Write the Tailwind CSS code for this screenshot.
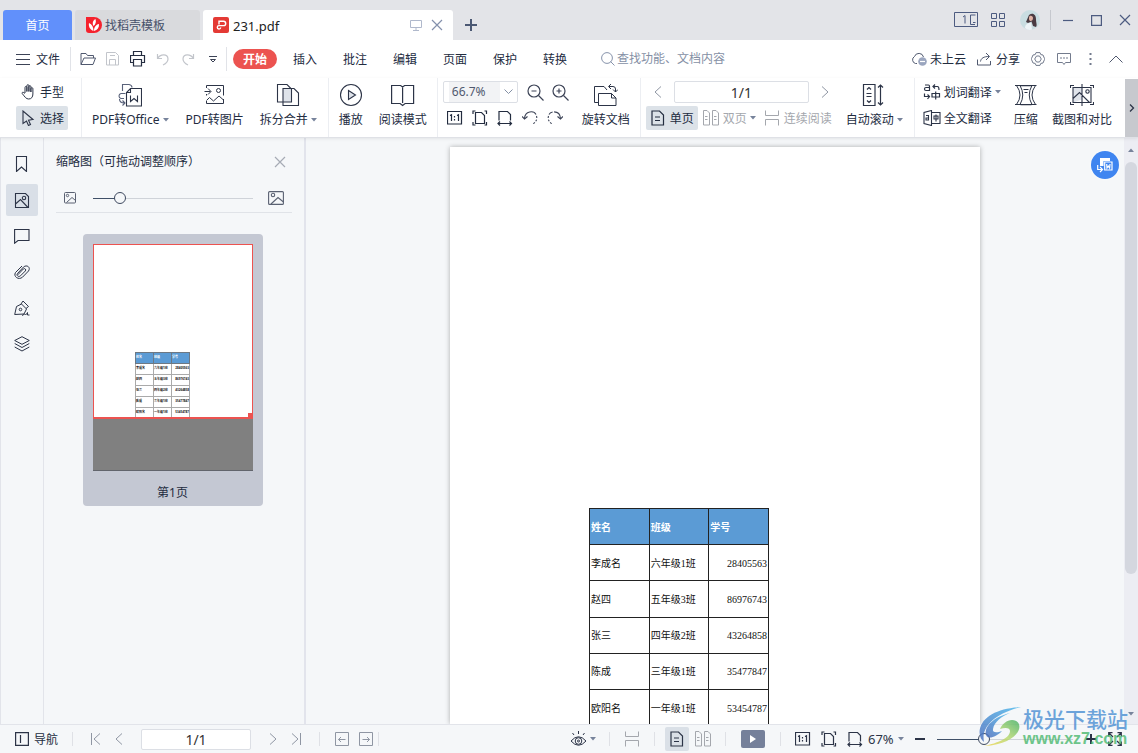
<!DOCTYPE html>
<html lang="zh-CN">
<head>
<meta charset="utf-8">
<title>231.pdf</title>
<script src="https://cdn.jsdelivr.net/npm/@tailwindcss/browser@4"></script>
</head>
<body class="h-screen flex flex-col overflow-hidden bg-white text-[12px] leading-4 text-[#232c3f] font-['Noto_Sans','Noto_Sans_CJK_SC',sans-serif] whitespace-nowrap">
<svg class="hidden">
  <symbol id="tri" viewBox="0 0 6 4"><path d="M0 0h6L3 3.500z" fill="#77839b"/></symbol>
  <symbol id="left" viewBox="0 0 8 12"><path d="M7 .5L1 6l6 5.500" fill="none" stroke="currentColor"/></symbol>
  <symbol id="right" viewBox="0 0 8 12"><path d="M1 .5L7 6l-6 5.500" fill="none" stroke="currentColor"/></symbol>
  <symbol id="one" viewBox="0 0 16 14"><g fill="none" stroke="currentColor"><path d="M.5.500h14v12.500h-14z" stroke-width="1.200"/><path d="M3 4.500l1.500-.7V10M10 4.500l1.500-.7V10M7.500 5v1.500M7.500 8v1.500" stroke-width="1.200"/></g></symbol>
  <symbol id="fitpage" viewBox="0 0 16 16"><g fill="none" stroke="currentColor" stroke-width="1.200"><path d="M3.500 2.500h6l3 3v8h-9zM1 4V1h2.500M12.500 1h2v3M14.500 12v3h-2M3.500 15H1v-3"/></g></symbol>
  <symbol id="fitwidth" viewBox="0 0 16 16"><g fill="none" stroke="currentColor" stroke-width="1.200"><path d="M2 10.500V1.500h8.500l3 3v6M1 13.500h13.500M3 11.500l-2 2 2 2M12.500 11.500l2 2-2 2"/></g></symbol>
  <symbol id="single" viewBox="0 0 14 16"><path d="M1 1h7.500l4 4v10H1zM4 7h5M4 10.500h5" fill="none" stroke="currentColor" stroke-width="1.200"/></symbol>
  <symbol id="double" viewBox="0 0 18 16"><path d="M1.500.5h3.500l2.500 2.500v12h-6zM10.500.5h3.500l2.500 2.500v12h-6zM3 6.500h2.500M3 9.500h2.500M12 6.500h2.500M12 9.500h2.500" fill="none" stroke="currentColor"/></symbol>
  <symbol id="cont" viewBox="0 0 16 16"><path d="M1.500.5v5h13v-5M1.500 15.500v-6h13v6" fill="none" stroke="currentColor"/></symbol>
  <symbol id="pic" viewBox="0 0 16 14"><g fill="none" stroke="currentColor" stroke-width="1.100"><rect x=".6" y=".6" width="14.800" height="12.800" rx="1"/><circle cx="5" cy="4" r="1.700"/><path d="M3 13l7-6.500 5.500 4.500"/></g></symbol>
  <symbol id="close" viewBox="0 0 12 12"><path d="M1 1l10 10M11 1L1 11" fill="none" stroke="currentColor" stroke-width="1.200"/></symbol>
</svg>

<!-- Title bar with document tabs -->
<header class="flex h-10 shrink-0 bg-[#e3e4e8] pl-[3px]">
  <nav class="flex items-end gap-[3px]">
    <button class="h-[30px] w-[69px] rounded-t-[3px] bg-[#6190fb] pt-[2px] text-white">首页</button>
    <button class="flex h-[30px] w-[125px] items-center gap-[3px] rounded-t-[3px] bg-[#d9dadd] pl-[11px] text-[#47516a]">
      <svg class="size-4" viewBox="0 0 16 16"><path d="M0 0h8a8 8 0 1 1 0 16H3a3 3 0 0 1-3-3z" fill="#f5222d"/><path d="M7.500 14C3 12 2.500 8.500 3 6c3 1.500 4.500 4 4.500 8zM7.500 9C6 6 7 3.500 9.500 2c1 3 0 5.500-2 7zM8 14c0-4 2-6.500 5-7 .3 3.500-1.500 6-5 7z" fill="#fff"/></svg>
      <span class="pt-[2px]">找稻壳模板</span>
    </button>
    <div class="flex h-[30px] w-[250px] items-center rounded-t-[3px] bg-white pl-[10px] pr-[10px] text-[#222]">
      <svg class="mr-1 size-4" viewBox="0 0 16 16"><rect width="16" height="16" rx="2" fill="#e43a35"/><path d="M6 7.500V4.200h4.500a2 2 0 0 1 0 4.400H6a1.700 1.700 0 1 0 1.700 1.900" fill="none" stroke="#fff" stroke-width="1.400"/></svg>
      <span class="pt-px text-[13px]">231.pdf</span>
      <button class="ml-auto mr-[9px]" aria-label="窗口"><svg class="h-3 w-3" viewBox="0 0 12 12"><path d="M.5 1.500h11v7H.5zM6 8.500v3M3 11.500h6" fill="none" stroke="#b0b9cc"/></svg></button>
      <button aria-label="关闭标签"><svg class="size-3 text-[#8491ad]"><use href="#close"/></svg></button>
    </div>
  </nav>
  <button class="ml-3 mt-[10px]" aria-label="新建"><svg class="size-3" viewBox="0 0 12 12"><path d="M6 0v12M0 6h12" stroke="#4b5873" stroke-width="2"/></svg></button>
  <div class="ml-auto flex items-center pr-[7px] text-[#4d5b80]">
    <button aria-label="窗口列表"><svg class="h-4 w-6" viewBox="0 0 24 16"><g fill="none" stroke="currentColor"><path d="M.5.500h23v14H.5zM16.500 3v9.500h4.500M16.500 3h5M19 10.500h2.500M9 5l2-1.500V11.500"/></g></svg></button>
    <button class="ml-[13px]" aria-label="应用"><svg class="size-[14px]" viewBox="0 0 14 14"><path d="M.5.500h5v5h-5zM8.500.500h5v5h-5zM.5 8.500h5v5h-5zM8.500 8.500h5v5h-5z" fill="none" stroke="currentColor"/></svg></button>
    <button class="ml-[15px]" aria-label="账号"><svg class="size-5" viewBox="0 0 20 20"><circle cx="10" cy="10" r="10" fill="#c9dde1"/><path d="M9 5c4-3 7 0 7 4s1.500 6 0 8l-3-1-1.500-4.500L8 13l-2-1z" fill="#4a3b42"/><path d="M9.500 6c2-.8 3.500.2 3.500 2s-1 3-2.500 3-2-2.500-1-5z" fill="#e0b3a5"/><path d="M5 18c0-3 2-5 6-5l1 6.500C10 20.500 7 20 5 18z" fill="#eef4f7"/></svg></button>
    <span class="ml-[10px] h-5 w-px bg-[#c6c8ce]"></span>
    <button class="ml-3" aria-label="最小化"><svg class="size-[11px]" viewBox="0 0 11 11"><path d="M0 5.500h10" stroke="currentColor" stroke-width="1.200"/></svg></button>
    <button class="ml-[17px]" aria-label="最大化"><svg class="size-[11px]" viewBox="0 0 11 11"><path d="M.6.600h9.800v9.800H.6z" fill="none" stroke="currentColor" stroke-width="1.200"/></svg></button>
    <button class="ml-[17px]" aria-label="关闭"><svg class="size-3"><use href="#close"/></svg></button>
  </div>
</header>

<!-- Menu row -->
<nav class="flex h-[38px] shrink-0 items-center pl-4 pr-[15px]">
  <button class="flex items-center gap-[6px]"><svg class="h-3 w-[14px]" viewBox="0 0 14 12"><path d="M0 1.500h14M0 6.500h14M0 11.500h14" stroke="#3c4356"/></svg><span class="pt-px">文件</span></button>
  <span class="ml-[10px] mr-[9px] h-6 w-px bg-[#e1e3e8]"></span>
  <button aria-label="打开"><svg class="h-[14px] w-4" viewBox="0 0 16 14"><path d="M1 12.500V1.500h5l1.500 2h6v2.500M1 12.500h12l2.500-6.500H4z" fill="none" stroke="#50596f"/></svg></button>
  <button class="ml-[10px]" aria-label="保存"><svg class="size-[14px]" viewBox="0 0 14 14"><path d="M.5.500h9l3 3v9.500H.5zM3.500 13V7.500h6V13M4 3.500h5" fill="none" stroke="#c2c5cb"/></svg></button>
  <button class="ml-[10px]" aria-label="打印"><svg class="size-4" viewBox="0 0 16 16"><path d="M3.500 4.500V.500h8v4M3.500 11.500H.5v-7h14v7h-3M3.500 8.500h8v6.500h-8z" fill="none" stroke="#252d40" stroke-width="1.200"/></svg></button>
  <button class="ml-[10px]" aria-label="撤销"><svg class="size-[14px]" viewBox="0 0 14 14"><path d="M1.500 2v4.500H6M1.500 6.500C4 2 12 1 12 7c0 3-2 4.500-5 6" fill="none" stroke="#c2c5cb" stroke-width="1.200"/></svg></button>
  <button class="ml-[11px]" aria-label="重做"><svg class="size-[14px]" viewBox="0 0 14 14"><path d="M12.500 2v4.500H8M12.500 6.500C10 2 2 1 2 7c0 3 2 4.500 5 6" fill="none" stroke="#c2c5cb" stroke-width="1.200"/></svg></button>
  <button class="ml-[14px]" aria-label="更多"><svg class="h-2 w-2" viewBox="0 0 8 8"><path d="M0 1.500h8M1.500 4.500h5L4 7z" fill="none" stroke="#3c4356"/></svg></button>
  <span class="ml-[9px] mr-[6px] h-6 w-px bg-[#e1e3e8]"></span>
  <button class="h-5 w-11 rounded-full bg-[#ec5350] pt-px font-bold text-white">开始</button>
  <div class="ml-4 flex gap-[26px] pt-[2px]">
    <button>插入</button><button>批注</button><button>编辑</button><button>页面</button><button>保护</button><button>转换</button>
  </div>
  <label class="ml-[34px] flex items-center gap-[2px]">
    <svg class="size-[14px]" viewBox="0 0 14 14"><path d="M9.500 9.500L13.500 13.500" stroke="#8793ab"/><circle cx="6" cy="6" r="5.400" fill="none" stroke="#8793ab"/></svg>
    <input class="w-32 bg-transparent outline-none placeholder:text-[#8590a5]" placeholder="查找功能、文档内容" aria-label="查找">
  </label>
  <div class="ml-auto flex items-center">
    <button class="flex items-center gap-[3px]"><svg class="h-[14px] w-4" viewBox="0 0 16 14"><path d="M6 11.500H4.500A3.800 3.800 0 0 1 3.500 4.500 4.700 4.700 0 0 1 12.500 5" fill="none" stroke="#50596f"/><circle cx="11.500" cy="9.500" r="4.300" fill="#9ba6bf"/><path d="M9 9.500h5" stroke="#fff" stroke-width="1.200"/></svg><span class="pt-[2px]">未上云</span></button>
    <button class="ml-[11px] flex items-center gap-[5px]"><svg class="size-[14px]" viewBox="0 0 14 14"><path d="M.5 7.500v5.500h13V9M3.500 9.500C4 6 7 4.500 12 4.500M9 1l3.500 3.500L9 8" fill="none" stroke="#50596f"/></svg><span class="pt-[2px]">分享</span></button>
    <button class="ml-[11px]" aria-label="设置"><svg class="size-[14px]" viewBox="0 0 14 14"><g fill="none" stroke="#737b8d"><path d="M5 .6h4l.8 2 2.200.4 1.500 3.500v1L12 11l-2.200.4-.8 2H5l-.8-2L2 11 .5 7.500v-1L2 3l2.200-.4z"/><path d="M5.500 4h3L10.300 7 8.500 10h-3L3.700 7z"/></g></svg></button>
    <button class="ml-3" aria-label="反馈"><svg class="size-[14px]" viewBox="0 0 14 14"><path d="M.5 1.500h13v9h-5L7 12.500l-1.500-2h-5z" fill="none" stroke="#737b8d"/><path d="M3 6h2M6 6h2M9 6h2" stroke="#737b8d"/></svg></button>
    <button class="ml-[18px]" aria-label="更多选项"><svg class="h-[14px] w-[3px]" viewBox="0 0 3 14"><path d="M.5 1h2v2h-2zM.5 6h2v2h-2zM.5 11h2v2h-2z" fill="#737b8d"/></svg></button>
    <button class="ml-[17px]" aria-label="收起"><svg class="h-2 w-[14px]" viewBox="0 0 14 8"><path d="M.5 7.500L7 1l6.500 6.500" fill="none" stroke="#50596f"/></svg></button>
  </div>
</nav>

<!-- Ribbon -->
<section class="relative z-10 flex h-[60px] shrink-0 border-b border-[#dfe1e6] bg-white pl-4 shadow-[0_1px_3px_rgba(0,0,0,0.08)]">
  <div class="flex w-[52px] flex-col pt-[2px]">
    <button class="flex h-6 items-center gap-[5px] pl-[5px]"><svg class="h-4 w-[14px]" viewBox="0 0 14 16"><path d="M4 9V3.500q0-1 .9-1t1 1V7.500V1.700q0-1 1-1t1 1V7.500V2.700q0-1 1-1t1 1V8V4.700q0-1 1-1t1 1v5.300c0 3-1.500 5-4.200 5C5 15 4 13 1.200 9.500 .7 8.300 2 7.500 4 9.500" fill="none" stroke="#2c3447"/></svg><span class="pt-[2px]">手型</span></button>
    <button class="mt-[2px] flex h-6 items-center gap-[5px] rounded-[2px] bg-[#dce2e8] pl-[5px]"><svg class="h-4 w-[14px]" viewBox="0 0 14 16"><path d="M2 1v12.500l3.500-2.500 2 4.500 2-1-2-4.300 4.500-.7z" fill="none" stroke="#2c3447" stroke-width="1.100"/></svg><span class="pt-px">选择</span></button>
  </div>
  <span class="ml-[13px] w-px bg-[#eceef2]"></span>
  <button class="ml-[10px] flex flex-col items-center justify-start pt-[5px]">
    <svg class="size-6" viewBox="0 0 24 24"><g fill="none" stroke="#2c3447" stroke-width="1.100"><path d="M12.500 5.500h11v17.500h-15V9.500zM12.500 5.500v4h-4"/><path d="M12.500 12.500v6l3.500-3 3.500 3v-6"/><path d="M4.500 8V1.500h6.500q3 .5 3 3M7.500 10.500H3q-2 .5-2 2.500t2 2.500h3M1.500 16Q1.500 20 6.500 20M4.500 17.500l2.500 2.500-2.500 2.500" stroke="#59627a"/></g></svg>
    <span class="mt-[5px] flex items-center gap-[3px]">PDF转Office<svg class="h-1 w-[6px]"><use href="#tri"/></svg></span>
  </button>
  <button class="ml-[17px] flex flex-col items-center justify-start pt-[5px]">
    <svg class="size-6" viewBox="0 0 24 24"><g fill="none" stroke="#2c3447"><path d="M3.500 5V2.500h17v10M3.500 11v1.500M3.500 18v2.500h17V16M1.500 8.500h6M5 5.500l3 3-3 3M3.500 17.500l3-3 4 3.500 5.500-5 4.500 4"/><circle cx="15.500" cy="7.500" r="2"/></g></svg>
    <span class="mt-[5px]">PDF转图片</span>
  </button>
  <button class="ml-4 flex flex-col items-center justify-start pt-[5px]">
    <svg class="size-6" viewBox="0 0 24 24"><path d="M7 6h8v13H7z" fill="#dfe3ea"/><path d="M1.500 1.500h9.500l4.500 4.500v13h-14zM7 5.500h11l4.500 4.500v12.500H7z" fill="none" stroke="#2c3447" stroke-width="1.100"/></svg>
    <span class="mt-[5px] flex items-center gap-[3px]">拆分合并<svg class="h-1 w-[6px]"><use href="#tri"/></svg></span>
  </button>
  <span class="ml-[11px] w-px bg-[#eceef2]"></span>
  <button class="ml-[10px] flex flex-col items-center justify-start pt-[5px]">
    <svg class="size-6" viewBox="0 0 24 24"><circle cx="12" cy="12" r="10.500" fill="none" stroke="#2c3447" stroke-width="1.100"/><path d="M9.500 7.500l7 4.500-7 4.500z" fill="#dfe3ea" stroke="#2c3447" stroke-width="1.100"/></svg>
    <span class="mt-[5px]">播放</span>
  </button>
  <button class="ml-4 flex flex-col items-center justify-start pt-[5px]">
    <svg class="size-6" viewBox="0 0 24 24"><path d="M.6 2.500h9l2 1.500 2-1.500h9v18h-8.500l-2.500 2-2.500-2H.6zM11.600 4v16" fill="none" stroke="#2c3447" stroke-width="1.200"/></svg>
    <span class="mt-[5px]">阅读模式</span>
  </button>
  <span class="ml-[10px] w-px bg-[#eceef2]"></span>
  <div class="ml-[5px] flex w-[127px] flex-col pt-[3px]">
    <div class="flex items-center">
      <label class="flex h-[22px] w-[75px] items-center justify-between rounded-[2px] border border-[#dcdfe5] pl-[5px] pr-1">
        <select class="h-5 w-[51px] appearance-none bg-[#f2f3f5] pl-[3px] text-[12px] leading-5 text-[#50596f] outline-none" aria-label="缩放比例"><option>66.7%</option></select>
        <svg class="h-[6px] w-[9px]" viewBox="0 0 9 6"><path d="M.5.500l4 4 4-4" fill="none" stroke="#8490a5"/></svg>
      </label>
      <button class="ml-[9px]" aria-label="缩小"><svg class="size-[17px]" viewBox="0 0 17 17"><g fill="none" stroke="#3c4356" stroke-width="1.200"><circle cx="7" cy="7" r="6"/><path d="M11.500 11.500l5 5M4.500 7h5"/></g></svg></button>
      <button class="ml-2" aria-label="放大"><svg class="size-[17px]" viewBox="0 0 17 17"><g fill="none" stroke="#3c4356" stroke-width="1.200"><circle cx="7" cy="7" r="6"/><path d="M11.500 11.500l5 5M4.500 7h5M7 4.500v5"/></g></svg></button>
    </div>
    <div class="mt-[7px] flex items-center gap-[9px] pl-1">
      <button aria-label="实际大小"><svg class="h-[14px] w-4"><use href="#one"/></svg></button>
      <button aria-label="适合页面"><svg class="size-4"><use href="#fitpage"/></svg></button>
      <button aria-label="适合宽度"><svg class="size-4"><use href="#fitwidth"/></svg></button>
      <button aria-label="向左旋转"><svg class="size-4" viewBox="0 0 16 16"><g fill="none" stroke="#3c4356" stroke-width="1.100"><path d="M2.500 8.500C3 .5 12 .5 14 4.500"/><path d="M14.500 6q1.500 5-4.500 8.500" stroke-dasharray="2 1.500"/><path d="M0 6.500L2.500 9l3-2.500"/></g></svg></button>
      <button aria-label="向右旋转"><svg class="size-4" viewBox="0 0 16 16"><g fill="none" stroke="#3c4356" stroke-width="1.100"><path d="M13.500 8.500C13 .5 4 .5 2 4.500" stroke-dasharray="10 1.500"/><path d="M1.500 6q-1.500 5 4.500 8.500" stroke-dasharray="2 1.500"/><path d="M16 6.500L13.500 9l-3-2.500"/></g></svg></button>
    </div>
  </div>
  <button class="ml-3 flex flex-col items-center justify-start pt-[5px]">
    <svg class="size-6" viewBox="0 0 24 24"><g fill="none" stroke="#2c3447"><path d="M4 19.500H.5V3.500h9.500l3 3.500M4.500 10.500h13l4.500 4.500v7.500h-17.500zM17.500 10.500v4.500h4.500"/><path d="M15 3.500h4q2.500 0 2.500 2.500v3M17 1l-2.500 2.500L17 6M19 6.500l2.500 2.500L24 6.500"/></g></svg>
    <span class="mt-[5px]">旋转文档</span>
  </button>
  <span class="ml-[10px] w-px bg-[#eceef2]"></span>
  <div class="ml-[5px] flex w-[187px] flex-col pt-[3px]">
    <div class="flex items-center pl-2 pr-1 text-[#8f96a3]">
      <button aria-label="上一页"><svg class="h-3 w-2"><use href="#left"/></svg></button>
      <input class="mx-3 h-[22px] w-[135px] rounded-[2px] border border-[#dcdfe5] text-center text-[14px] leading-5 text-[#333] outline-none" value="1/1" aria-label="页码">
      <button aria-label="下一页"><svg class="h-3 w-2"><use href="#right"/></svg></button>
    </div>
    <div class="mt-[3px] flex items-center text-[#a4a7ad]">
      <button class="flex h-6 w-[52px] items-center gap-[5px] rounded-[2px] bg-[#dce2e8] pl-[5px] text-[#232c3f]"><svg class="h-4 w-[14px]"><use href="#single"/></svg><span class="pt-px">单页</span></button>
      <button class="ml-1 flex items-center gap-[3px]"><svg class="h-4 w-[18px]"><use href="#double"/></svg><span class="pt-px">双页</span><svg class="h-1 w-[6px]"><use href="#tri"/></svg></button>
      <button class="ml-2 flex items-center gap-1"><svg class="size-4"><use href="#cont"/></svg><span class="pt-px">连续阅读</span></button>
    </div>
  </div>
  <button class="ml-[13px] flex flex-col items-center justify-start pt-[5px]">
    <svg class="size-6" viewBox="0 0 24 24"><path d="M1.500 1.500h11.500v21H1.500zM4.500 10.500h5M4.500 13.500h5M5 6.500l2-2 2 2M5 17.500l2 2 2-2M18.500 2v20M16 4.500l2.500-2.500L21 4.500M16 19.500l2.500 2.500 2.500-2.500" fill="none" stroke="#2c3447" stroke-width="1.200"/></svg>
    <span class="mt-[5px] flex items-center gap-[3px]">自动滚动<svg class="h-1 w-[6px]"><use href="#tri"/></svg></span>
  </button>
  <span class="ml-[11px] w-px bg-[#eceef2]"></span>
  <div class="ml-2 flex flex-col gap-[2px] pt-[2px]">
    <button class="flex h-6 items-center gap-[3px]"><svg class="h-4 w-[18px]" viewBox="0 0 18 16"><g fill="none" stroke="#2c3447" stroke-width="1.200"><path d="M2 1h3.500q1 0 1 1.500v4.500M6.500 3.500H3q-1.500 0-1.500 1.500T3 6.500h3.500M9 9.500h7.500v3.500H9zM12.700 7.500v8M10 2.500h4.500q1.500 0 1.500 3.500M12 .5l-2 2 2 2M1.500 9.500v3h5M4.500 10.500l2 2-2 2.500"/></g></svg><span class="pt-[2px]">划词翻译</span><svg class="h-1 w-[6px]"><use href="#tri"/></svg></button>
    <button class="flex h-6 items-center gap-[3px]"><svg class="h-4 w-[18px]" viewBox="0 0 18 16"><g fill="none" stroke="#2c3447" stroke-width="1.100"><path d="M8.500.500v15L1 13.500v-11zM8.500 2.500H17v11H8.500M3 5.500h2.500v4.500H3V8h2.500M11 6h4v3h-4zM13 4.500v7"/></g></svg><span class="pt-px">全文翻译</span></button>
  </div>
  <button class="ml-[13px] flex flex-col items-center justify-start pt-[5px]">
    <svg class="size-6" viewBox="0 0 24 24"><path d="M1 2.500h21.500M1 21.500h21.500M2.500 2.500q7 9.500 0 19M6 2.500q5.500 9.500 0 19M21.500 2.500q-7 9.500 0 19M18 2.500q-5.500 9.500 0 19" fill="none" stroke="#2c3447"/><path d="M6.500 2h11v1.200h-11zM6.500 21h11v1.200h-11z" fill="#2c3447"/><path d="M9.500 6.500h5M10.500 9.500h3" fill="none" stroke="#2c3447"/></svg>
    <span class="mt-[5px]">压缩</span>
  </button>
  <button class="ml-[14px] flex flex-col items-center justify-start pt-[5px]">
    <svg class="size-6" viewBox="0 0 24 24"><path d="M3 4.500h9v12l-9 3z" fill="#dfe3ea"/><g fill="none" stroke="#2c3447" stroke-width="1.100"><path d="M12 1v22M3 4.500h18v15H3zM.5 5V2.500H4M20 2.500h3.500V5M23.500 19v2.500H20M4 21.500H.5V19M3 15.500l6.500-6 10 10"/><circle cx="17.500" cy="8.500" r="1.700"/></g></svg>
    <span class="mt-[5px]">截图和对比</span>
  </button>
  <button class="ml-auto mt-px flex w-[13px] items-center justify-center bg-[#c7c9ce]" aria-label="展开功能区"><svg class="h-2 w-[6px]" viewBox="0 0 6 8"><path d="M1 .5L4.500 4 1 7.500" fill="none" stroke="#2c3447" stroke-width="1.300"/></svg></button>
</section>

<!-- Work area -->
<main class="flex min-h-0 flex-1 bg-[#f5f7f9]">
  <nav class="flex w-11 shrink-0 flex-col items-center gap-1 border-x border-[#e2e4ea] pt-[10px] text-[#2c3447]">
    <button class="grid size-8 place-items-center" aria-label="书签"><svg class="size-4" viewBox="0 0 16 16"><path d="M2.500.500h10v15l-5-4.500-5 4.500z" fill="none" stroke="currentColor" stroke-width="1.100"/></svg></button>
    <button class="grid size-8 place-items-center rounded-[2px] bg-[#d9dfe7]" aria-label="缩略图"><svg class="size-4" viewBox="0 0 16 16"><g fill="none" stroke="currentColor" stroke-width="1.100"><path d="M1.500 1.500h10l3 3v11h-13zM1.500 12l5-4.500 7.500 8"/><circle cx="10" cy="6" r="1.700"/></g></svg></button>
    <button class="grid size-8 place-items-center" aria-label="批注"><svg class="size-4" viewBox="0 0 16 16"><path d="M.6 1.500h14.400v11H4L.6 15.200z" fill="none" stroke="currentColor" stroke-width="1.100"/></svg></button>
    <button class="grid size-8 place-items-center" aria-label="附件"><svg class="size-4" viewBox="0 0 16 16"><path d="M3.800 10.800L9.300 5a1.300 1.300 0 0 1 2 2L6.500 11.800C4.500 13.500 2 11.500 3.500 9.500L9.500 3C13 .2 17 3.500 14.500 7L8.500 13.200C4.500 16.500-1 12.500 1.500 8.500L8 2" fill="none" stroke="currentColor"/></svg></button>
    <button class="grid size-8 place-items-center" aria-label="签名"><svg class="size-4" viewBox="0 0 16 16"><g fill="none" stroke="currentColor"><path d="M.7 14.500L2.500 6.500l5-2.500 5 5-2.500 5zM7 4l2-3 5.500 5.500L12 8.500"/><circle cx="6.500" cy="9.500" r="1.300"/><path d="M8 15.500q3-2 3.500-1t2-2v2.500h2"/></g></svg></button>
    <button class="grid size-8 place-items-center" aria-label="图层"><svg class="size-4" viewBox="0 0 16 16"><path d="M8 .7l7.300 3.800L8 8.300.7 4.500zM.7 7.500L8 11.500l7.300-4M.7 11L8 15l7.300-4" fill="none" stroke="currentColor"/></svg></button>
  </nav>

  <aside class="flex w-[262px] shrink-0 flex-col border-r-2 border-[#e2e4ec] px-3">
    <div class="flex h-12 items-center justify-between pr-1">
      <h2>缩略图（可拖动调整顺序）</h2>
      <button class="mr-[2px]" aria-label="关闭面板"><svg class="size-3 text-[#a6abb5]"><use href="#close"/></svg></button>
    </div>
    <div class="flex h-[27px] items-start border-b border-[#e0e3e8] px-2 pt-1 text-[#5a6172]">
      <div class="flex h-4 flex-1 items-center">
        <svg class="h-3 w-3" viewBox="0 0 12 12"><g fill="none" stroke="currentColor"><rect x=".5" y=".5" width="11" height="10.500" rx="1"/><circle cx="3.500" cy="3.500" r="1.200"/><path d="M2.500 10.500l5.500-5 3.500 3"/></g></svg>
        <input type="range" value="14" aria-label="缩略图大小" class="ml-[17px] mr-[15px] h-3 min-w-0 flex-1 appearance-none bg-[linear-gradient(to_right,#3f5068_17%,#cfd3d9_17%)] bg-[length:100%_1px] bg-center bg-no-repeat [&::-webkit-slider-thumb]:size-3 [&::-webkit-slider-thumb]:appearance-none [&::-webkit-slider-thumb]:rounded-full [&::-webkit-slider-thumb]:border [&::-webkit-slider-thumb]:border-[#3f4a60] [&::-webkit-slider-thumb]:bg-[#f5f7f9]">
        <svg class="h-[14px] w-4"><use href="#pic"/></svg>
      </div>
    </div>
    <figure class="ml-[27px] mt-[21px] w-[180px] rounded-[4px] bg-[#c4c8d3] p-[10px] pb-[5px]">
      <div class="border-b border-[#62656c] bg-[#808080]">
        <div class="relative flex h-[175px] items-end border border-b-2 border-[#ec5350] bg-white pl-[41px]">
          <table class="w-[55px] border-collapse text-[3px] leading-[3px] font-bold text-[#111]" aria-label="缩略图预览">
            <tr class="h-[11px] bg-[#5b9bd5] text-white"><th class="w-[18px] border border-[#6d7883] p-0 text-left">姓名</th><th class="w-[18px] border border-[#6d7883] p-0 text-left">班级</th><th class="border border-[#6d7883] p-0 text-left">学号</th></tr>
            <tr class="h-[11px]"><td class="border border-[#aaa] p-0">李成名</td><td class="border border-[#aaa] p-0">六年级1班</td><td class="border border-[#aaa] p-0 text-right">28405563</td></tr>
            <tr class="h-[11px]"><td class="border border-[#aaa] p-0">赵四</td><td class="border border-[#aaa] p-0">五年级3班</td><td class="border border-[#aaa] p-0 text-right">86976743</td></tr>
            <tr class="h-[11px]"><td class="border border-[#aaa] p-0">张三</td><td class="border border-[#aaa] p-0">四年级2班</td><td class="border border-[#aaa] p-0 text-right">43264858</td></tr>
            <tr class="h-[11px]"><td class="border border-[#aaa] p-0">陈成</td><td class="border border-[#aaa] p-0">三年级1班</td><td class="border border-[#aaa] p-0 text-right">35477847</td></tr>
            <tr class="h-[10px]"><td class="border border-b-0 border-[#aaa] p-0">欧阳名</td><td class="border border-b-0 border-[#aaa] p-0">一年级1班</td><td class="border border-b-0 border-[#aaa] p-0 text-right">53454787</td></tr>
          </table>
          <span class="absolute bottom-0 right-0 size-1 bg-[#ec5350]"></span>
        </div>
        <div class="h-[51px]"></div>
      </div>
      <figcaption class="mt-[14px] pr-px text-center">第1页</figcaption>
    </figure>
  </aside>

  <section class="relative flex min-w-0 flex-1 justify-center overflow-hidden pt-[9px]">
    <article class="w-[530px] shrink-0 bg-white pl-[139px] pt-[361px] shadow-[0_0_5px_rgba(0,0,0,0.3)]">
      <table class="w-[180px] table-fixed border-collapse text-[10px] leading-3 text-[#111] font-['Liberation_Serif','Noto_Sans_CJK_SC',serif]">
        <tr class="h-9 bg-[#5b9bd5] text-white"><th class="border border-[#222] px-px pb-0 pt-[2px] text-left">姓名</th><th class="border border-[#222] px-px pb-0 pt-[2px] text-left">班级</th><th class="border border-[#222] px-px pb-0 pt-[2px] text-left">学号</th></tr>
        <tr class="h-9"><td class="border border-[#222] px-px pb-0 pt-[2px]">李成名</td><td class="border border-[#222] px-px pb-0 pt-[2px]">六年级1班</td><td class="border border-[#222] px-px pb-0 pt-[2px] text-right">28405563</td></tr>
        <tr class="h-[37px]"><td class="border border-[#222] px-px pb-0 pt-[2px]">赵四</td><td class="border border-[#222] px-px pb-0 pt-[2px]">五年级3班</td><td class="border border-[#222] px-px pb-0 pt-[2px] text-right">86976743</td></tr>
        <tr class="h-9"><td class="border border-[#222] px-px py-0">张三</td><td class="border border-[#222] px-px py-0">四年级2班</td><td class="border border-[#222] px-px py-0 text-right">43264858</td></tr>
        <tr class="h-9"><td class="border border-[#222] px-px py-0">陈成</td><td class="border border-[#222] px-px py-0">三年级1班</td><td class="border border-[#222] px-px py-0 text-right">35477847</td></tr>
        <tr class="h-9"><td class="border border-[#222] px-px pb-0 pt-[2px]">欧阳名</td><td class="border border-[#222] px-px pb-0 pt-[2px]">一年级1班</td><td class="border border-[#222] px-px pb-0 pt-[2px] text-right">53454787</td></tr>
      </table>
    </article>
    <button class="absolute right-[5px] top-[13px] grid size-7 place-items-center rounded-full bg-[#3f85f0] shadow-[0_0_3px_rgba(255,255,255,1)]" aria-label="转换"><svg class="size-4" viewBox="0 0 16 16"><path d="M3 1h10v3H6.500v5H3z" fill="#fff"/><path d="M7.700 5h7.300v8H7.700zM9.700 7l.3 4 1.300-2 1.300 2 .4-4M.7 8v4.500h4M3 10l2.500 2.500L3 15" fill="none" stroke="#fff" stroke-width="1.200"/></svg></button>
  </section>
  <div class="flex w-[14px] shrink-0 flex-col items-center bg-[#ecedf3] pb-2 pt-[10px]">
    <svg class="h-1 w-[6px] rotate-180"><use href="#tri"/></svg>
    <div class="mt-[10px] h-[412px] w-3 rounded-full bg-[#d4d7df]"></div>
    <svg class="mt-auto h-1 w-[6px]"><use href="#tri"/></svg>
  </div>
</main>

<!-- Status bar -->
<footer class="flex h-[29px] shrink-0 items-center border-t border-[#e2e4ea] bg-[#f5f7f9] pl-[15px] pr-4">
  <button class="flex items-center gap-[5px]"><svg class="size-[14px]" viewBox="0 0 14 14"><path d="M.6.600h12.800v12.800H.6zM5.500 3v8" fill="none" stroke="#2c3447" stroke-width="1.200"/></svg><span class="pt-[2px]">导航</span></button>
  <span class="ml-[14px] h-[14px] w-px bg-[#dfe1e6]"></span>
  <div class="flex items-center text-[#8f96a3]">
    <button class="ml-[17px]" aria-label="第一页"><svg class="h-3 w-[11px]" viewBox="0 0 11 12"><path d="M1.500 0v12M10 .5L4 6l6 5.500" fill="none" stroke="currentColor"/></svg></button>
    <button class="ml-[14px]" aria-label="前一页"><svg class="h-3 w-2"><use href="#left"/></svg></button>
    <input class="ml-[18px] h-[21px] w-[110px] rounded-[2px] border border-[#dcdfe5] bg-white text-center text-[14px] leading-5 text-[#333] outline-none" value="1/1" aria-label="当前页">
    <button class="ml-[18px]" aria-label="后一页"><svg class="h-3 w-2"><use href="#right"/></svg></button>
    <button class="ml-[14px]" aria-label="最后一页"><svg class="h-3 w-[11px]" viewBox="0 0 11 12"><path d="M9.500 0v12M1 .5L7 6l-6 5.500" fill="none" stroke="currentColor"/></svg></button>
    <span class="ml-[17px] h-[14px] w-px bg-[#dfe1e6]"></span>
    <button class="ml-[15px]" aria-label="上一视图"><svg class="size-[14px]" viewBox="0 0 14 14"><path d="M.5.500h13v13H.5zM10.500 7.500h-7M6 5L3.500 7.500 6 10" fill="none" stroke="currentColor"/></svg></button>
    <button class="ml-[10px]" aria-label="下一视图"><svg class="size-[14px]" viewBox="0 0 14 14"><path d="M.5.500h13v13H.5zM3.500 7.500h7M8 5l2.500 2.500L8 10" fill="none" stroke="currentColor"/></svg></button>
    <span class="ml-[5px] h-[14px] w-px bg-[#dfe1e6]"></span>
  </div>
  <div class="ml-auto flex h-full items-center text-[#2c3447]">
    <button class="flex items-center gap-[3px]" aria-label="护眼模式"><svg class="h-4 w-[17px]" viewBox="0 0 17 16"><g fill="none" stroke="currentColor"><path d="M1 10Q8.500 1.500 16 10 8.500 18.500 1 10zM8.500 0v3M2.500 2l1.500 2M14.500 2L13 4"/><circle cx="8.500" cy="10" r="3.300"/><circle cx="8.500" cy="10" r="1"/></g></svg><svg class="h-1 w-[6px]"><use href="#tri"/></svg></button>
    <span class="ml-[13px] h-[14px] w-px bg-[#dfe1e6]"></span>
    <button class="ml-[14px] text-[#a4a7ad]" aria-label="连续"><svg class="size-4"><use href="#cont"/></svg></button>
    <span class="ml-[14px] h-[14px] w-px bg-[#dfe1e6]"></span>
    <button class="ml-[10px] grid h-6 w-6 place-items-center rounded-[2px] bg-[#dae0e7]" aria-label="单页"><svg class="h-4 w-[14px]"><use href="#single"/></svg></button>
    <button class="ml-[5px] text-[#a4a7ad]" aria-label="双页"><svg class="h-4 w-[18px]"><use href="#double"/></svg></button>
    <span class="ml-[13px] h-[14px] w-px bg-[#dfe1e6]"></span>
    <button class="ml-[15px] grid h-[18px] w-6 place-items-center rounded-[2px] bg-[#75809a]" aria-label="播放"><svg class="h-[10px] w-2" viewBox="0 0 8 10"><path d="M1 1l6 4-6 4z" fill="#fff"/></svg></button>
    <span class="ml-[15px] h-[14px] w-px bg-[#dfe1e6]"></span>
    <button class="ml-[14px]" aria-label="实际大小"><svg class="h-[14px] w-4"><use href="#one"/></svg></button>
    <button class="ml-[10px]" aria-label="适合页面"><svg class="size-4"><use href="#fitpage"/></svg></button>
    <button class="ml-[10px]" aria-label="适合宽度"><svg class="size-4"><use href="#fitwidth"/></svg></button>
    <button class="ml-[5px] flex w-9 items-center justify-between text-[13px]">67%<svg class="h-1 w-[6px]"><use href="#tri"/></svg></button>
    <button class="ml-[11px]" aria-label="缩小"><svg class="h-3 w-[10px]" viewBox="0 0 10 12"><path d="M0 6h10" stroke="currentColor" stroke-width="2"/></svg></button>
    <input type="range" value="33" aria-label="缩放" class="ml-3 mr-[13px] h-3 w-[136px] appearance-none bg-[linear-gradient(to_right,#3f5068_34%,#cfd3d9_34%)] bg-[length:100%_1px] bg-center bg-no-repeat [&::-webkit-slider-thumb]:size-3 [&::-webkit-slider-thumb]:appearance-none [&::-webkit-slider-thumb]:rounded-full [&::-webkit-slider-thumb]:border [&::-webkit-slider-thumb]:border-[#3f4a60] [&::-webkit-slider-thumb]:bg-[#f5f7f9]">
    <button aria-label="放大"><svg class="h-3 w-[10px]" viewBox="0 0 10 12"><path d="M0 6h10M5 1v10" stroke="currentColor" stroke-width="2"/></svg></button>
    <button class="ml-3" aria-label="全屏"><svg class="size-[14px]" viewBox="0 0 14 14"><path d="M.7 4.500V.700h3.800M9.500.700h3.800v3.800M13.300 9.500v3.800H9.500M4.500 13.300H.7V9.500M1 1l4 4M13 1L9 5M13 13L9 9M1 13l4-4" fill="none" stroke="currentColor" stroke-width="1.200"/></svg></button>
  </div>
</footer>

<!-- Site watermark floating over the corner -->
<div class="pointer-events-none absolute bottom-[5px] right-[10px] z-20 flex items-center gap-px opacity-80">
  <svg class="h-[42px] w-[43px]" viewBox="0 0 43 42">
    <defs>
      <linearGradient id="wb" x1="0" y1="1" x2="1" y2="0"><stop offset="0" stop-color="#4569bb"/><stop offset="1" stop-color="#45b8ee"/></linearGradient>
      <linearGradient id="wg" x1="0" y1="1" x2="1" y2="0"><stop offset="0" stop-color="#f5d548"/><stop offset=".5" stop-color="#b5d86b"/><stop offset="1" stop-color="#3fae60"/></linearGradient>
    </defs>
    <path d="M42 1C20 2 3 10 .7 24 0 30 2 34 5 36 2 22 14 8 42 1z" fill="url(#wb)"/>
    <path d="M31 7C15 11 5 20 7 29c2 5 10 2 16-4-5 2-10 2-9-2C15 16 23 10 31 7z" fill="url(#wb)"/>
    <path d="M33 14c15 1 8 25-28 26 14-3 26-8 26-15 0-3-4-4-10-2 2-5 7-9 12-9z" fill="url(#wg)"/>
  </svg>
  <div class="flex flex-col">
    <span class="text-[21px] font-medium leading-6 text-[#4a8fd3]">极光下载站</span>
    <span class="text-[16px] font-bold leading-4 text-[#4cb96f] font-['Liberation_Sans',sans-serif]">www.xz7.com</span>
  </div>
</div>
</body>
</html>
